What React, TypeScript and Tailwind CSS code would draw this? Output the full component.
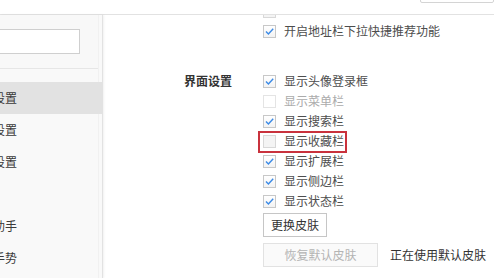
import { ReactNode } from "react";

const font = { fontFamily: '"Noto Sans CJK SC", "Noto Sans", sans-serif' };

const navItems = ["界面设置", "安全设置", "隐私设置", "高级", "下载助手", "鼠标手势"];

const options = [
  { label: "显示头像登录框", checked: true },
  { label: "显示菜单栏", checked: false, disabled: true },
  { label: "显示搜索栏", checked: true },
  { label: "显示收藏栏", checked: false, marked: true },
  { label: "显示扩展栏", checked: true },
  { label: "显示侧边栏", checked: true },
  { label: "显示状态栏", checked: true },
];

const Box = ({ checked, disabled }: { checked: boolean; disabled?: boolean }) => (
  <span
    className={
      "flex size-[13px] shrink-0 items-center justify-center border " +
      (checked
        ? "border-[#c8c8c8] bg-gradient-to-b from-white to-[#f3f3f3]"
        : disabled
          ? "border-[#e4e4e4] bg-white"
          : "border-[#d8d8d8] bg-[#f4f4f4]")
    }
  >
    {checked && (
      <svg width="11" height="11" viewBox="0 0 11 11" fill="none">
        <path d="M2 5.6 L4.4 8 L9.2 2.8" stroke="#3b8ae6" strokeWidth="1.4" />
      </svg>
    )}
  </span>
);

const Row = ({
  checked,
  disabled,
  children,
}: {
  checked: boolean;
  disabled?: boolean;
  children?: ReactNode;
}) => (
  <div className="flex h-[20px] items-center gap-[8px]">
    <Box checked={checked} disabled={disabled} />
    <span className={disabled ? "text-[#ababab]" : "text-[#4d4d4d]"}>{children}</span>
  </div>
);

const App = () => {
  return (
    <div className="relative h-[278px] w-[494px] overflow-hidden bg-white text-[12px] leading-none" style={font}>
      {/* Top bar */}
      <div className="flex h-[15px] justify-end overflow-hidden border-b border-[#e2e2e2]">
        <div className="mt-[-20px] h-[23px] w-[74px] rounded-[2px] border border-[#d4d4d4]" />
      </div>

      <div className="flex h-[263px]">
        {/* Sidebar */}
        <aside className="w-[103px] shrink-0 border-r border-[#e2e2e2] bg-[#f9f9f9] shadow-[1px_0_2px_rgba(0,0,0,0.06)]">
          <div className="h-full w-[99px] border-r border-[#f1f1f1]">
            <div className="h-[54px] border-b border-[#e6e6e6] bg-[#f8f8f8] pt-[14px]">
              <div className="ml-[-20px] h-[25px] w-[100px] border border-[#cfcfcf] bg-white" />
            </div>
            <ul className="mt-[13px]">
              {navItems.map((t, i) => (
                <li
                  key={t}
                  className={
                    "flex h-[32px] w-[103px] items-center whitespace-nowrap text-[#3a3a3a] " +
                    (i === 0 ? "bg-[#e2e2e2]" : "")
                  }
                >
                  <span className={t.length === 4 ? "ml-[-31px]" : "ml-[-40px]"}>{t}</span>
                </li>
              ))}
            </ul>
          </div>
        </aside>

        {/* Main */}
        <main className="flex-1 overflow-hidden">
          <div className="mt-[-14px] flex">
            <div className="w-[129px] shrink-0 text-right">
              <div className="h-[70px]" />
              <div className="flex h-[20px] items-center justify-end font-bold text-[#333]">界面设置</div>
            </div>
            <div className="ml-[31px] flex flex-col">
              <Row checked={false} />
              <Row checked>开启地址栏下拉快捷推荐功能</Row>
              <div className="h-[30px]" />
              {options.map((o) => (
                <div key={o.label} className="relative">
                  <Row checked={o.checked} disabled={o.disabled}>
                    {o.label}
                  </Row>
                  {o.marked && (
                    <span className="pointer-events-none absolute left-[-5px] top-0 h-[22px] w-[89px] border-2 border-[#c9323d]" />
                  )}
                </div>
              ))}
              <button className="mt-[2px] h-[24px] w-[64px] border border-[#c6c6c6] bg-white text-[#333]">
                更换皮肤
              </button>
              <div className="mt-[6px] flex items-center gap-[12px] whitespace-nowrap">
                <button disabled className="h-[24px] w-[115px] border border-[#e2e2e2] bg-[#fafafa] text-[#b4b4b4]">
                  恢复默认皮肤
                </button>
                <span className="text-[#333]">正在使用默认皮肤</span>
              </div>
            </div>
          </div>
        </main>
      </div>
    </div>
  );
};

export default App;
